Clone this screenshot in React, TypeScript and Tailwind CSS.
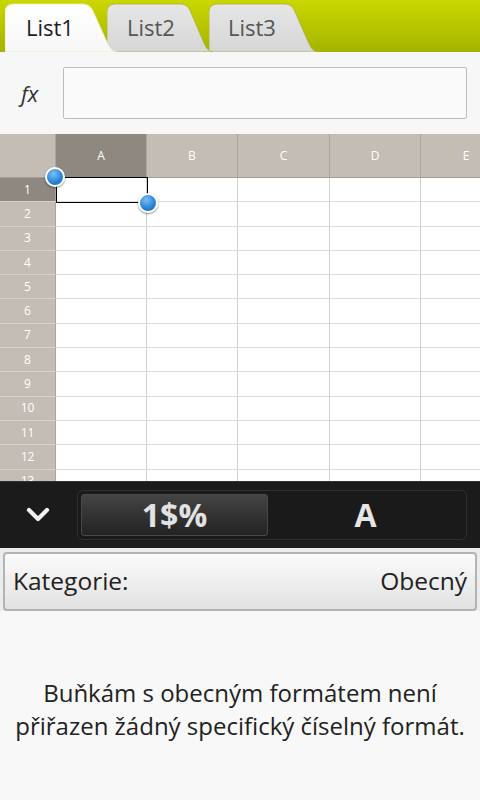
const font = { fontFamily: '"Open Sans", "Noto Sans", sans-serif' }

const COLS = [
  { label: "A", w: "w-[91px]" },
  { label: "B", w: "w-[91px]" },
  { label: "C", w: "w-[92px]" },
  { label: "D", w: "w-[91px]" },
  { label: "E", w: "w-[91px]" },
]

const ROWS = Array.from({ length: 13 }, (_, i) => i + 1)

function TabShape({ active, id }: { active: boolean; id: string }) {
  return (
    <svg className="absolute inset-0 h-full w-full" viewBox="0 0 110 49" preserveAspectRatio="none">
      <defs>
        <linearGradient id={id} x1="0" y1="0" x2="0" y2="1">
          <stop offset="0" stopColor={active ? "#ffffff" : "#e6e6e6"} />
          <stop offset="1" stopColor={active ? "#f7f7f7" : "#d6d6d6"} />
        </linearGradient>
      </defs>
      <path
        d="M0,49 L0,9 Q0,1 9,1 L76,1 Q83,1 86,7 L101,41 Q105,49 110,49 Z"
        fill={`url(#${id})`}
        stroke={active ? "#e8eec0" : "#a9b23a"}
        strokeWidth="0.8"
      />
    </svg>
  )
}

function Tab({ label, active, cls, id }: { label: string; active: boolean; cls: string; id: string }) {
  return (
    <div className={`relative h-[49px] ${cls}`}>
      <TabShape active={active} id={id} />
      <span
        className={`relative flex h-full items-center text-[22px] ${active ? "text-[#1e1e1e]" : "text-[#555]"}`}
      >
        {label}
      </span>
    </div>
  )
}

function Handle({ className }: { className: string }) {
  return (
    <div
      className={`absolute h-[20px] w-[20px] rounded-full border-2 border-white bg-[radial-gradient(circle_at_40%_30%,#7cc0f4,#2a86d8_55%,#1763b3)] shadow-[0_1px_2px_rgba(0,0,0,0.5)] ${className}`}
    />
  )
}

export default function App() {
  return (
    <div className="flex h-[800px] w-[480px] flex-col overflow-hidden bg-[#f7f7f7]" style={font}>
      {/* sheet tabs */}
      <div className="flex h-[52px] items-end bg-gradient-to-b from-[#cbd700] to-[#a4b400] pl-[5px]">
        <Tab label="List1" active id="t1" cls="z-10 w-[112px] pl-[21px]" />
        <Tab label="List2" active={false} id="t2" cls="z-[5] -ml-[10px] w-[106px] pl-[20px]" />
        <Tab label="List3" active={false} id="t3" cls="-ml-[4px] w-[109px] pl-[19px]" />
      </div>

      {/* formula bar */}
      <div className="flex h-[82px] items-center">
        <div className="w-[63px] pl-[21px] text-[22px] italic text-[#333]">fx</div>
        <div className="mr-[13px] h-[52px] flex-1 rounded-[2px] border border-[#bdbdbd] bg-[#fafafa]" />
      </div>

      {/* grid */}
      <div className="relative h-[347px] overflow-hidden bg-white">
        <div className="flex h-[44px] border-b border-[#a29c94] bg-[#c3bdb5]">
          <div className="w-[56px] shrink-0 border-r border-[#aaa49c]" />
          {COLS.map((c, i) => (
            <div
              key={c.label}
              className={`${c.w} flex shrink-0 items-center justify-center border-r border-[#aca69e] text-[12px] text-white ${
                i === 0 ? "bg-[#8e8880]" : ""
              }`}
            >
              {c.label}
            </div>
          ))}
        </div>
        {ROWS.map((r) => (
          <div key={r} className="flex h-[24.3px]">
            <div
              className={`flex w-[56px] shrink-0 items-center justify-center border-b border-r border-b-[#d6d1ca] border-r-[#aaa49c] text-[12px] text-white ${
                r === 1 ? "bg-[#8e8880]" : "bg-[#c3bdb5]"
              }`}
            >
              {r}
            </div>
            {COLS.map((c) => (
              <div key={c.label} className={`${c.w} shrink-0 border-b border-r border-b-[#dcdcdc] border-r-[#d0d0d0]`} />
            ))}
          </div>
        ))}
        {/* selection */}
        <div className="absolute left-[56px] top-[43px] h-[26px] w-[92px] border-[1.5px] border-black" />
        <Handle className="left-[45px] top-[33px]" />
        <Handle className="left-[138px] top-[59px]" />
      </div>

      {/* format toolbar */}
      <div className="flex h-[67px] items-center border-t border-[#333] bg-[#1b1b1b]">
        <div className="flex w-[77px] justify-center">
          <svg width="24" height="16" viewBox="0 0 24 16" className="-ml-[1px]">
            <polyline points="3,3 12,12 21,3" fill="none" stroke="#f0f0f0" strokeWidth="4.2" strokeLinecap="round" strokeLinejoin="round" />
          </svg>
        </div>
        <div className="mr-[13px] flex h-[50px] flex-1 rounded-[6px] border border-[#2f2f2f] bg-[#1a1a1a] p-[3px]">
          <div className="flex w-[187px] items-center justify-center rounded-[3px] border border-[#484848] bg-gradient-to-b from-[#444] to-[#232323] text-[32px] font-bold text-[#e2e2e2]">
            1$%
          </div>
          <div className="flex flex-1 items-center justify-center text-[32px] font-bold text-[#e6e6e6]">A</div>
        </div>
      </div>

      {/* category button */}
      <div className="bg-[#ececec] px-[3px] pt-[4px]">
        <div className="flex h-[59px] items-center justify-between rounded-[4px] border-2 border-[#b3b3b3] bg-gradient-to-b from-[#fbfbfb] to-[#e2e2e2] px-[8px] text-[24.5px] text-[#222]">
          <span>Kategorie:</span>
          <span>Obecný</span>
        </div>
      </div>

      {/* description */}
      <div className="flex flex-1 justify-center bg-[#f8f8f8] pt-[65px]">
        <p className="text-center text-[24px] leading-[33px] text-[#222]">
          Buňkám s obecným formátem není
          <br />
          přiřazen žádný specifický číselný formát.
        </p>
      </div>
    </div>
  )
}
